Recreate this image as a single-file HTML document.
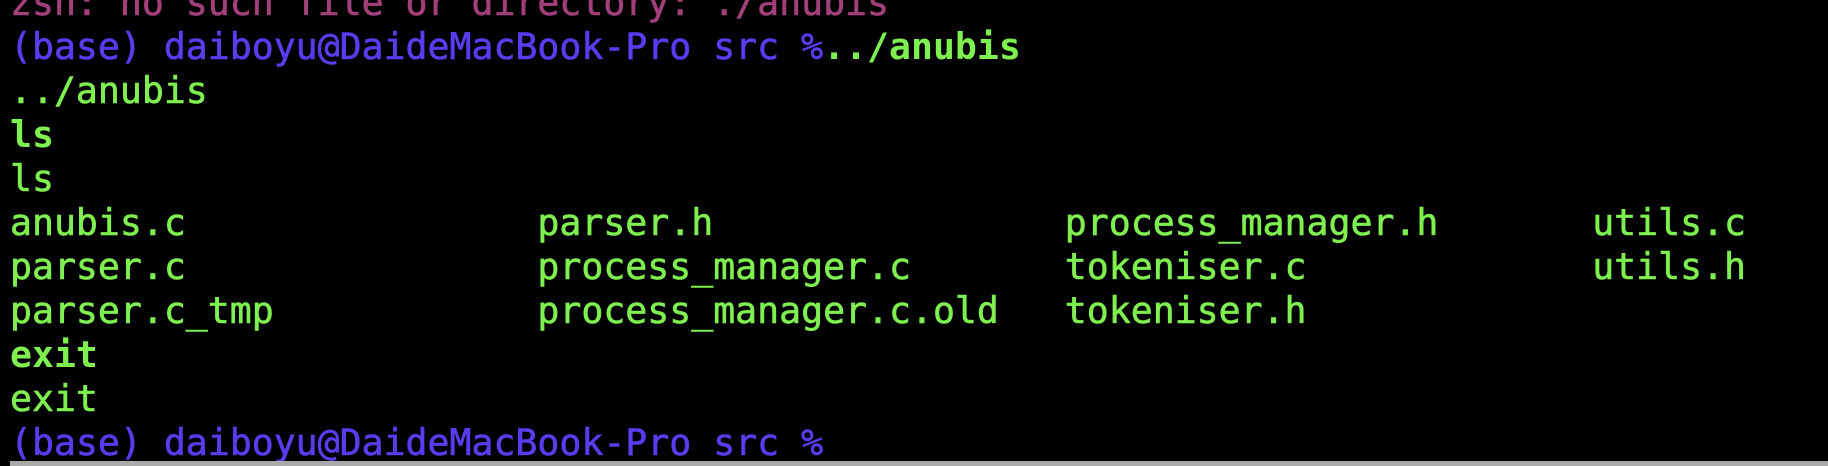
<!DOCTYPE html>
<html><head><meta charset="utf-8"><style>
html,body{margin:0;padding:0;background:#000;width:1828px;height:466px;overflow:hidden;position:relative}
pre{position:absolute;left:10px;top:-19px;margin:0;font-family:"DejaVu Sans Mono","Liberation Mono",monospace;font-size:36.5px;line-height:44px;color:#7ef04f;white-space:pre;-webkit-text-stroke:0.6px currentColor}
.p{color:#5a3cf0}.r{color:#a3407c}.b{font-weight:bold;-webkit-text-stroke:0}
#bar{position:absolute;left:10px;top:461px;width:1818px;height:5px;background:#aaa}
</style></head><body>
<pre><span class="r">zsh: no such file or directory: ./anubis</span>
<span class="p">(base) daiboyu@DaideMacBook-Pro src %</span><span class="b">../anubis</span>
../anubis
<span class="b">ls</span>
ls
anubis.c                parser.h                process_manager.h       utils.c
parser.c                process_manager.c       tokeniser.c             utils.h
parser.c_tmp            process_manager.c.old   tokeniser.h
<span class="b">exit</span>
exit
<span class="p">(base) daiboyu@DaideMacBook-Pro src %</span></pre>
<div id="bar"></div>
</body></html>
